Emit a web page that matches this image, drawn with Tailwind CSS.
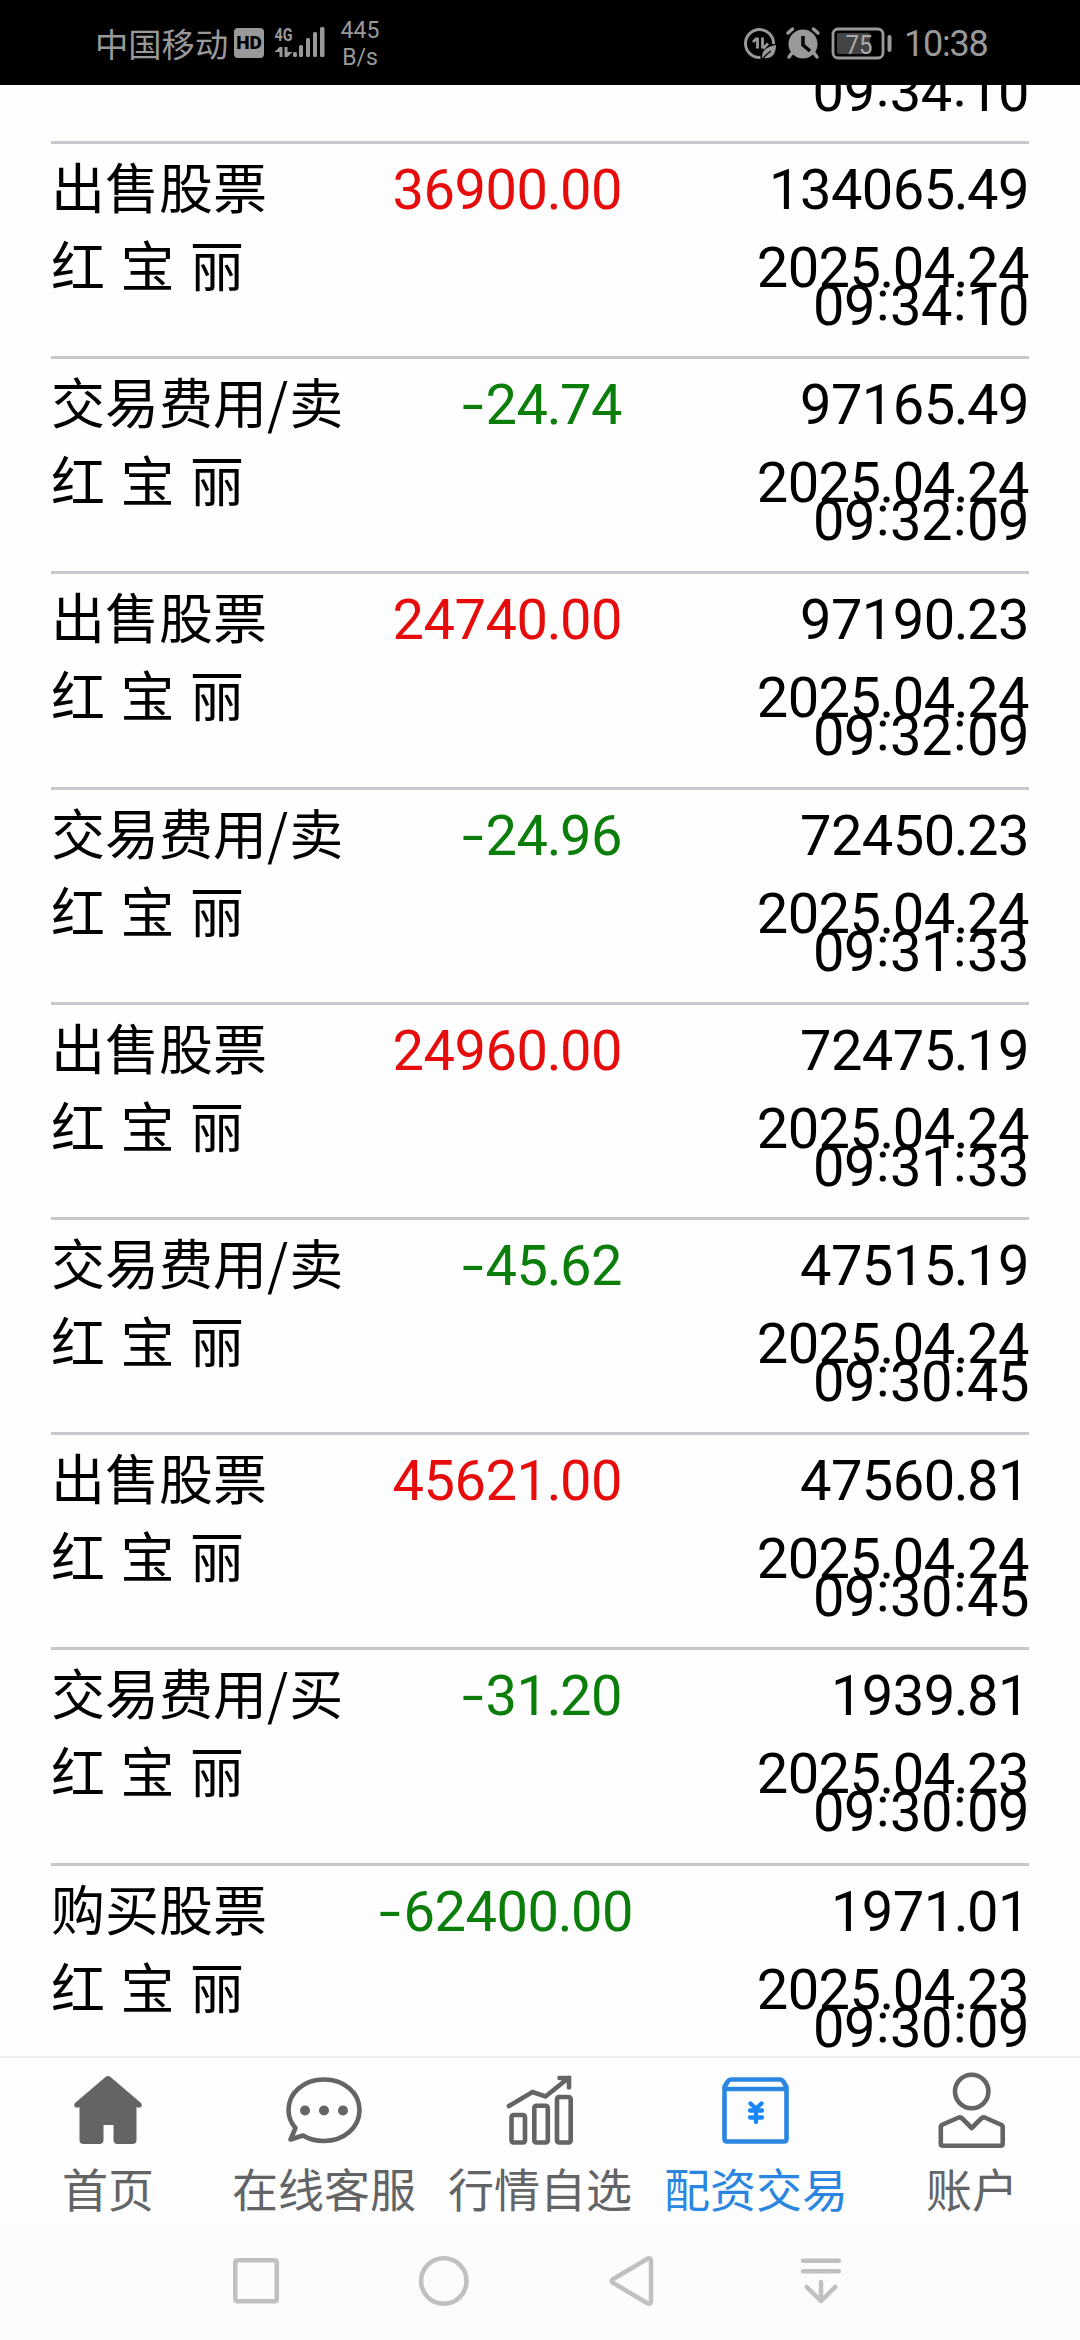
<!DOCTYPE html>
<html lang="zh-CN">
<head>
<meta charset="utf-8">
<title>资金明细</title>
<script src="https://cdn.jsdelivr.net/npm/@tailwindcss/browser@4"></script>
</head>
<body class="bg-[#fefefe]">
<div class="flex h-[2340px] w-[1080px] flex-col overflow-hidden bg-[#fefefe] text-black">

  <!-- status bar -->
  <header class="flex h-[85px] shrink-0 items-center bg-black pl-[95px] pr-[92px] text-[#999]">
    <span class="font-['Noto_Sans_CJK_SC',sans-serif] text-[33.3px] leading-[40px] w-[139px] whitespace-nowrap">中国移动</span>
    <span class="flex h-[30px] w-[30px] items-center justify-center rounded-[4px] bg-[#999] font-['Roboto',sans-serif] text-[19px] font-black leading-none text-black">HD</span>
    <svg class="ml-[9px] h-[40px] w-[54px] mb-[1px]" viewBox="273 22 54 40" fill="#999">
      <text x="274.500" y="41" font-family="Roboto" font-weight="700" font-size="19" textLength="18" lengthAdjust="spacingAndGlyphs">4G</text>
      <path d="M279.500 47v10h3V47zM274.500 52l5-5v5zM284.500 47v10h3V47zM287.500 57l5-5h-5z"/>
      <rect x="293" y="52" width="4" height="5" rx="1.500"/>
      <rect x="299" y="45" width="4" height="12" rx="1.500"/>
      <rect x="306" y="38" width="4" height="19" rx="1.500"/>
      <rect x="313" y="32" width="4" height="25" rx="1.500"/>
      <rect x="320" y="27" width="4.500" height="30" rx="1.500"/>
    </svg>
    <span class="ml-[11px] w-[44px] text-center font-['Roboto',sans-serif] text-[23px] leading-[27px] mt-[2px]">445<br>B/s</span>
    <svg class="ml-auto h-[36px] w-[152px]" viewBox="740 24 152 36" fill="none" stroke="#999">
      <path d="M772.500 43a14 14 0 1 0-13 13.500" stroke-width="3"/>
      <path d="M756.500 36.500v11M752 41l4-4M761.500 36.500v11M762 47.500l5-5" stroke-width="2.800"/>
      <path d="M761 57c0-8 4-11 14-13 0 9-4 14-12 13z" fill="#999" stroke="none"/>
      <path d="M762 57c3-3 5-5 8-7" stroke="#000" stroke-width="1.200"/>
      <circle cx="802" cy="43" r="14.500" fill="#999" stroke="none"/>
      <path d="M787 32l4.500-4M817 32l-4.500-4M791 52l-3 4M813 52l3 4" stroke-width="3.500" stroke-linecap="round"/>
      <path d="M802 35v9l7 6" stroke="#000" stroke-width="3.500"/>
      <rect x="832" y="28" width="50" height="29" rx="5" stroke-width="2.800"/>
      <rect x="836" y="32" width="33" height="21" rx="2" fill="#444" stroke="none"/>
      <text x="858" y="52.500" text-anchor="middle" font-family="Roboto" font-size="26" textLength="27" lengthAdjust="spacingAndGlyphs" fill="#aaa" stroke="none">75</text>
      <rect x="886.500" y="34" width="4" height="17" rx="2" fill="#999" stroke="none"/>
    </svg>
    <span class="ml-[11px] w-[84px] whitespace-nowrap font-['Roboto',sans-serif] text-[36px] leading-[42px] tracking-[-1.2px] mt-[3px]">10:38</span>
  </header>

  <!-- transaction records -->
  <main class="min-h-0 flex-1 overflow-hidden px-[51px] font-['Roboto','Noto_Sans_CJK_SC',sans-serif]">
    <div id="rows"></div>
  </main>

  <!-- tab bar -->
  <nav class="grid h-[166px] shrink-0 grid-cols-5 border-t-2 border-[#eee] bg-[#fefefe] pt-[7px] font-['Noto_Sans_CJK_SC',sans-serif] text-[46px] text-[#636466]">
    <a class="flex flex-col items-center">
      <svg class="size-[90px]" viewBox="63 2065 90 90" fill="#636466"><path d="M105.500 2077q2.500-2 5 0l30.500 26q1.500 2 .5 3.500-2 2-5 .5V2140q0 4-4 4h-15q-4 0-4-4v-15h-10v15q0 4-4 4h-16q-4 0-4-4v-33q-3 1.500-5-.5-1-1.500.5-3.500z"/></svg>
      <span class="whitespace-nowrap leading-[65px]">首页</span>
    </a>
    <a class="flex flex-col items-center">
      <svg class="size-[90px]" viewBox="279 2065 90 90" fill="none" stroke="#636466" stroke-width="4.600" stroke-linejoin="round"><path d="M303 2135.500c6 3.700 13 5.500 21 5.500 20 0 35.500-13.500 35.500-31s-15.500-30.500-35.500-30.500-35.500 13-35.500 30.500c0 7 2.500 13 7 18l-5 11.500z"/><g fill="#636466" stroke="none"><circle cx="305" cy="2110.500" r="5"/><circle cx="324" cy="2110.500" r="5"/><circle cx="343" cy="2110.500" r="5"/></g></svg>
      <span class="whitespace-nowrap leading-[65px]">在线客服</span>
    </a>
    <a class="flex flex-col items-center">
      <svg class="size-[90px]" viewBox="495 2065 90 90" fill="none" stroke="#636466" stroke-width="4.600" stroke-linecap="round" stroke-linejoin="round"><rect x="511.500" y="2115" width="13.500" height="27.500" rx="2"/><rect x="534.300" y="2105.800" width="13.500" height="36.700" rx="2"/><rect x="557" y="2097" width="13.700" height="45.500" rx="2"/><path d="M509 2106l23.500-14 13 4.500 23-18.500M559.500 2078h9.500v9.500" stroke-linejoin="miter"/></svg>
      <span class="whitespace-nowrap leading-[65px]">行情自选</span>
    </a>
    <a class="flex flex-col items-center text-[#2a86e0]">
      <svg class="size-[90px]" viewBox="711 2065 90 90" fill="none" stroke="#2a86e0" stroke-width="4.600" stroke-linejoin="round"><path d="M724.500 2087v52q0 2.500 2.500 2.500h57q2.500 0 2.500-2.500v-52l-3.500-6q-1-1.500-3-1.500h-49q-2 0-3 1.500zM725 2089h61"/><path d="M750.500 2103.500l5.500 5 5.500-5M756 2109v13M750 2110.500h12M750 2117.500h12" stroke-width="4.300" stroke-linecap="round" stroke="#1a86f5"/></svg>
      <span class="whitespace-nowrap leading-[65px]">配资交易</span>
    </a>
    <a class="flex flex-col items-center">
      <svg class="size-[90px]" viewBox="927 2065 90 90" fill="none" stroke="#636466" stroke-width="4.600" stroke-linejoin="round"><circle cx="971.700" cy="2091.500" r="16.700"/><path d="M940.800 2126.500v17q0 2.300 2.300 2.300h57.300q2.300 0 2.300-2.300v-17l-1-1.500-17-7.500q-2-.5-3.500 1l-9.500 9.500-9.500-9.500q-1.500-1.500-3.500-1l-17 7.500z"/></svg>
      <span class="whitespace-nowrap leading-[65px]">账户</span>
    </a>
  </nav>

  <!-- system navigation -->
  <footer class="flex h-[118px] shrink-0 items-center justify-between bg-[#fcfcfc] pb-0 pl-[226px] pr-[229px]">
    <svg class="size-[60px]" viewBox="226 2251 60 60" fill="none" stroke="#c0c0c0" stroke-width="4.500"><rect x="235.300" y="2260.300" width="41.500" height="41" rx="2"/></svg>
    <svg class="size-[60px]" viewBox="414 2251 60 60" fill="none" stroke="#c0c0c0" stroke-width="4.500"><circle cx="443.800" cy="2281" r="22.700"/></svg>
    <svg class="size-[60px]" viewBox="603 2251 60 60" fill="none" stroke="#c0c0c0" stroke-width="4.500" stroke-linejoin="round"><path d="M612.500 2279.500l34.500-20.500q4-2 4 2v40q0 4-4 2l-34.500-20.500q-1.500-1.500 0-3z"/></svg>
    <svg class="size-[60px]" viewBox="791 2251 60 60" fill="none" stroke="#c0c0c0" stroke-width="4.500" stroke-linecap="round" stroke-linejoin="round"><path d="M803 2260.700h35.800M803 2271.200h35.800M821 2282v19M806.700 2287l14.300 14 14.300-14"/></svg>
  </footer>
</div>

<script>
  const records = [
    ['出售股票', '36900.00', '134065.49', '2025.04.24', '09:34:10'],
    ['交易费用/卖', '-24.74', '97165.49', '2025.04.24', '09:32:09'],
    ['出售股票', '24740.00', '97190.23', '2025.04.24', '09:32:09'],
    ['交易费用/卖', '-24.96', '72450.23', '2025.04.24', '09:31:33'],
    ['出售股票', '24960.00', '72475.19', '2025.04.24', '09:31:33'],
    ['交易费用/卖', '-45.62', '47515.19', '2025.04.24', '09:30:45'],
    ['出售股票', '45621.00', '47560.81', '2025.04.24', '09:30:45'],
    ['交易费用/买', '-31.20', '1939.81', '2025.04.23', '09:30:09'],
    ['购买股票', '-62400.00', '1971.01', '2025.04.23', '09:30:09'],
  ];
  const num = s => s
    .replace(/\./g, '<i class="not-italic -ml-[1px] -mr-[1px]">.</i>')
    .replace(/:/g, '<b class="font-normal relative -top-[5px] ml-[1px] mr-[1px]">:</b>')
    .replace(/^-/, '<u class="inline-block no-underline origin-right scale-x-140 mr-[3px]">-</u>');
  // the record scrolled under the status bar shows only its time line
  const scrolled = `
    <section class="h-[56px] overflow-hidden">
      <p class="-mt-[12px] whitespace-nowrap text-right text-[56px] leading-[38px] tracking-[-0.45px]">${num('09:34:10')}</p>
    </section>`;
  document.getElementById('rows').innerHTML = scrolled + records.map(([type, amount, balance, date, time]) => `
    <section class="flex h-[215.2px] justify-between border-t-[3px] border-[#c6c7ca]">
      <div class="w-[300px] whitespace-nowrap pt-[3px] font-['Noto_Sans_CJK_SC',sans-serif] text-[54px] leading-[78px]">
        <p>${type.replace('/', '<span class="mr-[1px]">/</span>')}</p>
        <p>红<span class="inline-block w-[15.5px]"></span>宝<span class="inline-block w-[15.5px]"></span>丽</p>
      </div>
      <div class="flex h-[85px] w-[271px] justify-end whitespace-nowrap pt-[7px] text-[56px] leading-[78px] tracking-[-0.45px] ${amount[0] === '-' ? 'text-[#0a7d0a]' : 'text-[#e60c0c]'}">
        <p class="${amount.length > 8 ? '-mr-[11px]' : ''}">${num(amount)}</p>
      </div>
      <div class="w-[407px] whitespace-nowrap pt-[7px] text-right text-[56px] leading-[78px] tracking-[-0.5px]">
        <p>${num(balance)}</p>
        <p class="mt-[20px] h-[76px] leading-[38px]">${num(date)}<br>${num(time)}</p>
      </div>
    </section>`).join('');
</script>
</body>
</html>
